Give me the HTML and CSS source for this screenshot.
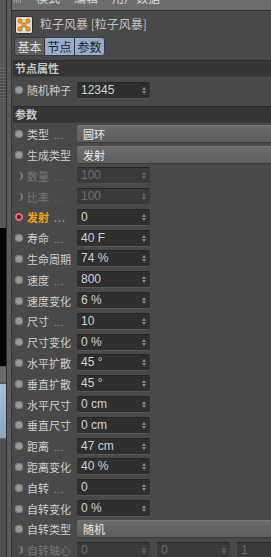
FILE: index.html
```html
<!DOCTYPE html>
<html lang="zh">
<head>
    <meta charset="UTF-8">
    <title>粒子风暴 - 属性</title>
    <link rel="stylesheet" href="styles.css">
</head>
<body>
<div class="app">
    <!-- sliver of the neighbouring panel -->
    <div class="side">
        <div class="side-top"></div>
        <div class="side-lines"></div>
        <div class="side-mid"></div>
        <div class="side-black"></div>
        <div class="side-spin"></div>
        <div class="side-blue"></div>
        <div class="side-bottom"></div>
    </div>
    <div class="gutter"></div>

    <div class="panel">
        <div class="menubar">
            <span class="grip"></span>
            <span>模式</span><span>编辑</span><span>用户数据</span>
        </div>

        <div class="head">
            <svg class="obj-icon" width="18" height="18" viewBox="0 0 18 18">
                <rect x="0.5" y="0.5" width="17" height="17" rx="2" fill="#e2ded6" stroke="#2a2a2a"/>
                <path d="M5 5 L13 13 M13 5 L5 13" stroke="#8a5a20" stroke-width="1"/>
                <circle cx="5" cy="5" r="2.2" fill="#f09a2a" stroke="#9a5a10" stroke-width="0.6"/>
                <circle cx="13" cy="5" r="2.2" fill="#f09a2a" stroke="#9a5a10" stroke-width="0.6"/>
                <circle cx="9" cy="9" r="2.2" fill="#f09a2a" stroke="#9a5a10" stroke-width="0.6"/>
                <circle cx="5" cy="13" r="2.2" fill="#f09a2a" stroke="#9a5a10" stroke-width="0.6"/>
                <circle cx="13" cy="13" r="2.2" fill="#f09a2a" stroke="#9a5a10" stroke-width="0.6"/>
            </svg>
            <span class="title">粒子风暴 [粒子风暴]</span>
        </div>

        <div class="tabs">
            <span class="tab">基本</span>
            <span class="tab on">节点</span>
            <span class="tab on">参数</span>
        </div>

        <div class="section">节点属性</div>
        <div class="rows">
            <div class="row">
                <span class="dot"></span><span class="label">随机种子</span>
                <span class="field">12345<i class="spin"></i></span>
            </div>
        </div>

        <div class="section">参数</div>
        <div class="rows tight" id="params"></div>
    </div>
</div>

<script>
// parameter rows: label, value, kind
const params = [
    ['类型', '圆环', 'drop'],
    ['生成类型', '发射', 'drop'],
    ['数量', '100', 'off'],
    ['比率', '100', 'off'],
    ['发射', '0', 'hot'],
    ['寿命', '40 F'],
    ['生命周期', '74 %'],
    ['速度', '800'],
    ['速度变化', '6 %'],
    ['尺寸', '10'],
    ['尺寸变化', '0 %'],
    ['水平扩散', '45 °'],
    ['垂直扩散', '45 °'],
    ['水平尺寸', '0 cm'],
    ['垂直尺寸', '0 cm'],
    ['距离', '47 cm'],
    ['距离变化', '40 %'],
    ['自转', '0'],
    ['自转变化', '0 %'],
    ['自转类型', '随机', 'drop'],
    ['自转轴心', ['0', '0', '1'], 'off']
];

const list = document.getElementById('params');

params.forEach(p => {
    const [name, value, kind] = p;
    const row = document.createElement('div');
    row.className = 'row' + (kind === 'off' || kind === 'hot' ? ' ' + kind : '');

    // short labels get the dotted leader
    const dots = name.length < 3 ? '<span class="dots">. . .</span>' : '';
    let fields;
    if (kind === 'drop') {
        fields = `<span class="select">${value}</span>`;
    } else if (Array.isArray(value)) {
        fields = value.map(v => `<span class="field">${v}<i class="spin"></i></span>`).join('');
    } else {
        fields = `<span class="field">${value}<i class="spin"></i></span>`;
    }

    row.innerHTML = `<span class="dot"></span><span class="label">${name}${dots}</span>${fields}`;
    list.appendChild(row);
});
</script>
</body>
</html>
```

FILE: styles.css
```css
/* Global */
body {
    margin: 0;
    background: #494949;
    font-family: "Noto Sans CJK SC", "Liberation Sans", sans-serif;
    font-size: 11px;
    color: #cfcfcf;
    overflow: hidden;
}

.app {
    display: flex;
    width: 271px;
    height: 557px;
    overflow: hidden;
}

/* Neighbouring panel sliver */
.side {
    width: 6px;
    display: flex;
    flex-direction: column;
    background: #585858;
    flex: none;
}

.side-top { height: 68px; }

.side-lines {
    height: 32px;
    background: repeating-linear-gradient(#6a6a6a 0 1px, #505050 1px 3px);
}

.side-mid { height: 128px; }

.side-black {
    height: 138px;
    background: #050505;
}

.side-spin {
    height: 15px;
    margin-top: 1px;
    background: #6a6a6a;
}

.side-blue {
    height: 54px;
    margin-top: 2px;
    background: linear-gradient(135deg, #a8bedc, #8aa3c8);
}

.side-bottom {
    flex: 1;
    background: #4e4e4e;
    border-top: 1px solid #666;
}

.gutter {
    width: 4px;
    background: #5a5a5a;
    border-left: 1px solid #303030;
    flex: none;
}

/* Main panel */
.panel {
    flex: 1;
    min-width: 0;
    overflow: hidden;
    border-left: 1px solid #353535;
}

.menubar {
    height: 10px;
    background: #6c6c6c;
    border-bottom: 1px solid #2c2c2c;
    display: flex;
    gap: 14px;
    padding-left: 2px;
    overflow: hidden;
    font-size: 12px;
    line-height: 10px;
    color: #d8d8d8;
}

.menubar span {
    margin-top: -7px;
}

.menubar .grip {
    width: 8px;
    height: 3px;
    margin-top: 0;
    background: repeating-linear-gradient(90deg, #9a9a9a 0 1px, transparent 1px 2px);
}

.head {
    display: flex;
    align-items: center;
    height: 25px;
    padding-left: 3px;
}

.obj-icon {
    margin-top: 2px;
}

.title {
    margin-left: 7px;
    font-size: 12px;
    color: #c4c4c4;
}

/* Tabs */
.tabs {
    display: flex;
    margin: 1px 0 0 2px;
    height: 18px;
}

.tab {
    width: 29px;
    height: 17px;
    line-height: 17px;
    text-align: center;
    font-size: 12px;
    background: #5f5f5f;
    color: #dcdcdc;
    border: 1px solid #3a3a3a;
    border-right: none;
}

.tab:first-child {
    border-radius: 3px 0 0 3px;
}

.tab:last-child {
    border-right: 1px solid #3a3a3a;
    border-radius: 0 3px 3px 0;
}

.tab.on {
    background: #94acd0;
    color: #1c1c1c;
}

/* Section headers */
.section {
    margin: 5px 0 0 1px;
    height: 15px;
    line-height: 15px;
    padding-left: 2px;
    background: #353535;
    border-top: 1px solid #2c2c2c;
    border-bottom: 1px solid #3e3e3e;
    font-weight: bold;
    color: #c8c8c8;
}

.rows {
    padding-top: 3px;
}

.rows.tight {
    padding-top: 1px;
}

/* Rows */
.row {
    display: flex;
    align-items: center;
    height: 20.8px;
    padding-left: 3px;
}

.dot {
    width: 8px;
    height: 8px;
    border-radius: 50%;
    background: #9b9b9b;
    box-shadow: inset 0 0 0 1px #7a7a7a;
    flex: none;
}

.label {
    width: 50px;
    margin-left: 4px;
    white-space: nowrap;
    overflow: hidden;
    color: #cfcfcf;
    flex: none;
}

.dots {
    margin-left: 5px;
    font-size: 9px;
    letter-spacing: -0.5px;
    color: #9a9a9a;
}

.field {
    position: relative;
    width: 69px;
    height: 15px;
    line-height: 15px;
    padding-left: 4px;
    margin-right: 7px;
    background: #2f2f2f;
    border-top: 1px solid #262626;
    border-bottom: 1px solid #585858;
    border-radius: 2px;
    color: #d2d2d2;
    font-family: "Liberation Sans", "Noto Sans CJK SC", sans-serif;
    font-size: 12px;
    flex: none;
}

/* little up/down arrows at the right of a number box */
.spin {
    position: absolute;
    right: 4px;
    top: 4px;
    width: 0;
    height: 0;
    border-left: 2px solid transparent;
    border-right: 2px solid transparent;
    border-bottom: 3px solid #8a8a8a;
}

.spin::after {
    content: "";
    position: absolute;
    left: -2px;
    top: 4px;
    border-left: 2px solid transparent;
    border-right: 2px solid transparent;
    border-top: 3px solid #8a8a8a;
}

/* dropdown box running to the panel edge */
.select {
    flex: 1;
    height: 16px;
    line-height: 16px;
    padding-left: 6px;
    background: linear-gradient(#6c6c6c, #5e5e5e);
    border-top: 1px solid #777;
    border-bottom: 1px solid #3a3a3a;
    border-radius: 2px 0 0 2px;
    color: #ececec;
    font-size: 11px;
}

/* Disabled rows */
.row.off .label { color: #767676; }
.row.off .dots { color: #6a6a6a; }
.row.off .field {
    background: #3b3b3b;
    color: #6f6f6f;
    border-bottom-color: #4e4e4e;
}
.row.off .spin,
.row.off .spin::after {
    border-bottom-color: #666;
    border-top-color: #666;
}
.row.off .dot {
    background: transparent;
    box-shadow: inset -2px 0 0 0 #777;
}

/* Animated (keyframed) parameter */
.row.hot .label {
    color: #f2a21c;
    font-weight: bold;
}
.row.hot .dot {
    background: #3a2a2a;
    box-shadow: inset 0 0 0 2px #e86a78;
}
```
